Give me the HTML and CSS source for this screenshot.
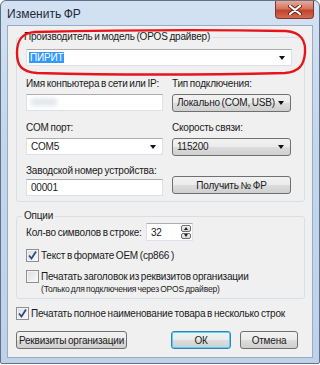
FILE: index.html
```html
<!DOCTYPE html>
<html>
<head>
    <title>Изменить ФР</title>
    <meta charset="utf-8">
    <link rel="stylesheet" href="styles.css">
</head>
<body>
    <div class="window">
        <div class="titlebar">
            <span class="title">Изменить ФР</span>
            <div class="close">
                <svg width="14" height="10" viewBox="0 0 14 10"><path d="M2 1 L12 9 M12 1 L2 9" stroke="#6b2418" stroke-width="4" stroke-linecap="round"/><path d="M2 1 L12 9 M12 1 L2 9" stroke="#fff" stroke-width="2.2" stroke-linecap="round"/></svg>
            </div>
        </div>

        <div class="client">
            <fieldset class="group group-main">
                <legend>Производитель и модель (OPOS драйвер)</legend>
                <div class="combo combo-edit combo-wide"><span class="selected">ПИРИТ</span><i class="arrow"></i></div>

                <div class="grid">
                    <div class="field">
                        <label>Имя конпьютера в сети или IP:</label>
                        <div class="input"><span class="blurred"></span></div>
                    </div>
                    <div class="field">
                        <label>Тип подключения:</label>
                        <div class="combo combo-btn">Локально (COM, USB)<i class="arrow"></i></div>
                    </div>
                    <div class="field">
                        <label>COM порт:</label>
                        <div class="combo combo-edit">COM5<i class="arrow"></i></div>
                    </div>
                    <div class="field">
                        <label>Скорость связи:</label>
                        <div class="combo combo-btn">115200<i class="arrow"></i></div>
                    </div>
                    <div class="field field-last">
                        <label>Заводской номер устройства:</label>
                        <div class="input">00001</div>
                    </div>
                    <div class="field field-btn">
                        <button class="btn">Получить № ФР</button>
                    </div>
                </div>
            </fieldset>

            <fieldset class="group group-opts">
                <legend>Опции</legend>
                <div class="spin-row">
                    <span class="spin-label">Кол-во символов в строке:</span>
                    <div class="spin">
                        <span>32</span>
                        <div class="spin-btns">
                            <i class="spin-up"></i>
                            <i class="spin-down"></i>
                        </div>
                    </div>
                </div>
                <div class="check">
                    <span class="box checked"><svg width="9" height="9" viewBox="0 0 9 9"><path d="M1 4.5 L3.5 7.5 L8 0.5" fill="none" stroke="#2c4a85" stroke-width="1.8"/></svg></span>
                    <span>Текст в формате OEM (cp866 )</span>
                </div>
                <div class="check check-2">
                    <span class="box"></span>
                    <span>Печатать заголовок из реквизитов организации</span>
                </div>
                <div class="note">(Только для подключения через OPOS драйвер)</div>
            </fieldset>

            <div class="check check-outer">
                <span class="box checked"><svg width="9" height="9" viewBox="0 0 9 9"><path d="M1 4.5 L3.5 7.5 L8 0.5" fill="none" stroke="#2c4a85" stroke-width="1.8"/></svg></span>
                <span>Печатать полное наименование товара в несколько строк</span>
            </div>

            <div class="buttons">
                <button class="btn btn-org">Реквизиты организации</button>
                <button class="btn btn-ok">ОК</button>
                <button class="btn btn-cancel">Отмена</button>
            </div>
        </div>

        <!-- red marker drawn over the screenshot -->
        <svg class="marker" width="320" height="80" viewBox="0 0 320 80">
            <path d="M34 31 C 120 29, 230 29, 285 30 C 300 31, 305 40, 304 52 C 303 64, 298 71, 284 72 C 200 74, 110 74, 36 72 C 20 71, 16 64, 16 52 C 16 40, 20 32, 34 31 Z" fill="none" stroke="#e8141c" stroke-width="2.4"/>
        </svg>
    </div>
</body>
</html>
```

FILE: styles.css
```css
* {
    box-sizing: border-box;
}
body {
    margin: 0;
    background: #fff;
    font-family: "Liberation Sans", Arial, sans-serif;
    font-size: 10px;
    letter-spacing: -0.2px;
    word-spacing: -0.8px;
    color: #1a1a1a;
    white-space: nowrap;
}
.window {
    position: relative;
    width: 320px;
    height: 364px;
    border: 1px solid #5f7288;
    border-radius: 6px 6px 2px 2px;
    background: linear-gradient(#d3e1f2, #c4d6ec 40%, #bfd2ea);
    padding: 0 6px 6px;
    overflow: hidden;
}
.titlebar {
    height: 24px;
    display: flex;
    justify-content: space-between;
    align-items: flex-start;
}
.title {
    font-size: 12px;
    letter-spacing: 0;
    margin-top: 6px;
    color: #1e2a3a;
}
.close {
    width: 39px;
    height: 18px;
    margin-right: -1px;
    border: 1px solid #7a3a30;
    border-top: none;
    border-radius: 0 0 4px 4px;
    background: linear-gradient(#e9a99a, #d47561 45%, #c2432b 55%, #d26a50);
    display: flex;
    align-items: center;
    justify-content: center;
}
.client {
    height: 333px;
    background: #f0f0f0;
    border: 1px solid #98abc2;
    padding: 4px 7px 0 8px;
}

/* group boxes */
.group {
    border: 1px solid #d5dfe5;
    border-radius: 3px;
    margin: 0;
    padding: 0 12px 5px 9px;
}
.group legend {
    padding: 0 2px;
    margin-left: -4px;
    line-height: 14px;
}
.group-main {
    height: 172px;
}
.combo-wide {
    margin-top: 5px;
    height: 18px;
}
.grid {
    display: grid;
    grid-template-columns: 137px 119px;
    column-gap: 9px;
    row-gap: 9px;
    margin-top: 11px;
}
.field label {
    display: block;
    line-height: 14px;
    margin-bottom: 3px;
}
.field-last label {
    margin-top: -1px;
    margin-bottom: 1px;
}
.field-btn {
    display: flex;
    align-items: flex-end;
}

/* controls */
.input, .combo {
    position: relative;
    height: 17px;
    line-height: 15px;
    padding-left: 4px;
}
.input, .combo-edit {
    background: #fff;
    border: 1px solid #dde1e7;
    border-top-color: #abadb3;
}
.combo-btn {
    border: 1px solid #707070;
    border-radius: 3px;
    background: linear-gradient(#f2f2f2, #ebebeb 50%, #dddddd 51%, #cfcfcf);
    height: 18px;
    line-height: 16px;
}
.arrow {
    position: absolute;
    right: 6px;
    top: 6px;
    border-left: 3.5px solid transparent;
    border-right: 3.5px solid transparent;
    border-top: 4px solid #111;
}
.selected {
    background: #3399ff;
    color: #fff;
    padding: 0 1px;
    margin-left: -2px;
}
.blurred {
    display: inline-block;
    width: 26px;
    height: 8px;
    margin-top: 3px;
    background: #e4e7ea;
    filter: blur(2px);
}
.btn {
    font-family: inherit;
    font-size: 10px;
    letter-spacing: -0.2px;
    word-spacing: -0.8px;
    color: #1a1a1a;
    border: 1px solid #707070;
    border-radius: 3px;
    background: linear-gradient(#f2f2f2, #ebebeb 50%, #dddddd 51%, #cfcfcf);
    height: 18px;
    padding: 0;
    white-space: nowrap;
}
.field-btn .btn {
    width: 119px;
    margin-bottom: 2px;
}

/* options group */
.group-opts {
    margin-top: 7px;
    height: 90px;
    padding-left: 9px;
}
.spin-row {
    display: flex;
    align-items: center;
    height: 18px;
}
.spin-label {
    width: 120px;
}
.spin {
    width: 47px;
    height: 18px;
    background: #fff;
    border: 1px solid #dde1e7;
    border-top-color: #abadb3;
    display: flex;
    align-items: center;
    justify-content: space-between;
    padding-left: 4px;
}
.spin-btns {
    width: 10px;
    height: 14px;
    margin-right: 1px;
    display: flex;
    flex-direction: column;
    gap: 1px;
}
.spin-btns i {
    flex: 1;
    border: 1px solid #6f6f6f;
    border-radius: 2px;
    background: linear-gradient(#f3f3f3, #d6d6d6);
    display: flex;
    align-items: center;
    justify-content: center;
}
.spin-up::after, .spin-down::after {
    content: "";
    border-left: 2.5px solid transparent;
    border-right: 2.5px solid transparent;
}
.spin-up::after {
    border-bottom: 3px solid #222;
}
.spin-down::after {
    border-top: 3px solid #222;
}
.check {
    display: flex;
    align-items: center;
    gap: 2px;
    height: 14px;
    margin-top: 7px;
}
.check-2 {
    margin-top: 7px;
}
.box {
    width: 13px;
    height: 13px;
    border: 1px solid #8e8f8f;
    background: linear-gradient(135deg, #dcdcdc, #fbfbfb);
    display: flex;
    align-items: center;
    justify-content: center;
    box-shadow: inset 0 0 0 1px #f4f4f4;
}
.note {
    font-size: 8.5px;
    margin-left: 15px;
    line-height: 12px;
    margin-top: 0;
}
.check-outer {
    margin-top: 7px;
}

/* bottom buttons */
.buttons {
    display: flex;
    margin-top: 11px;
}
.btn-org {
    width: 111px;
}
.btn-ok {
    width: 60px;
    margin-left: auto;
    border-color: #3c7fb1;
    box-shadow: inset 0 0 0 1px #48d7fb;
}
.btn-cancel {
    width: 58px;
    margin-left: 9px;
    margin-right: 7px;
}

/* annotation overlay */
.marker {
    position: absolute;
    left: 0;
    top: 0;
    pointer-events: none;
}
```
